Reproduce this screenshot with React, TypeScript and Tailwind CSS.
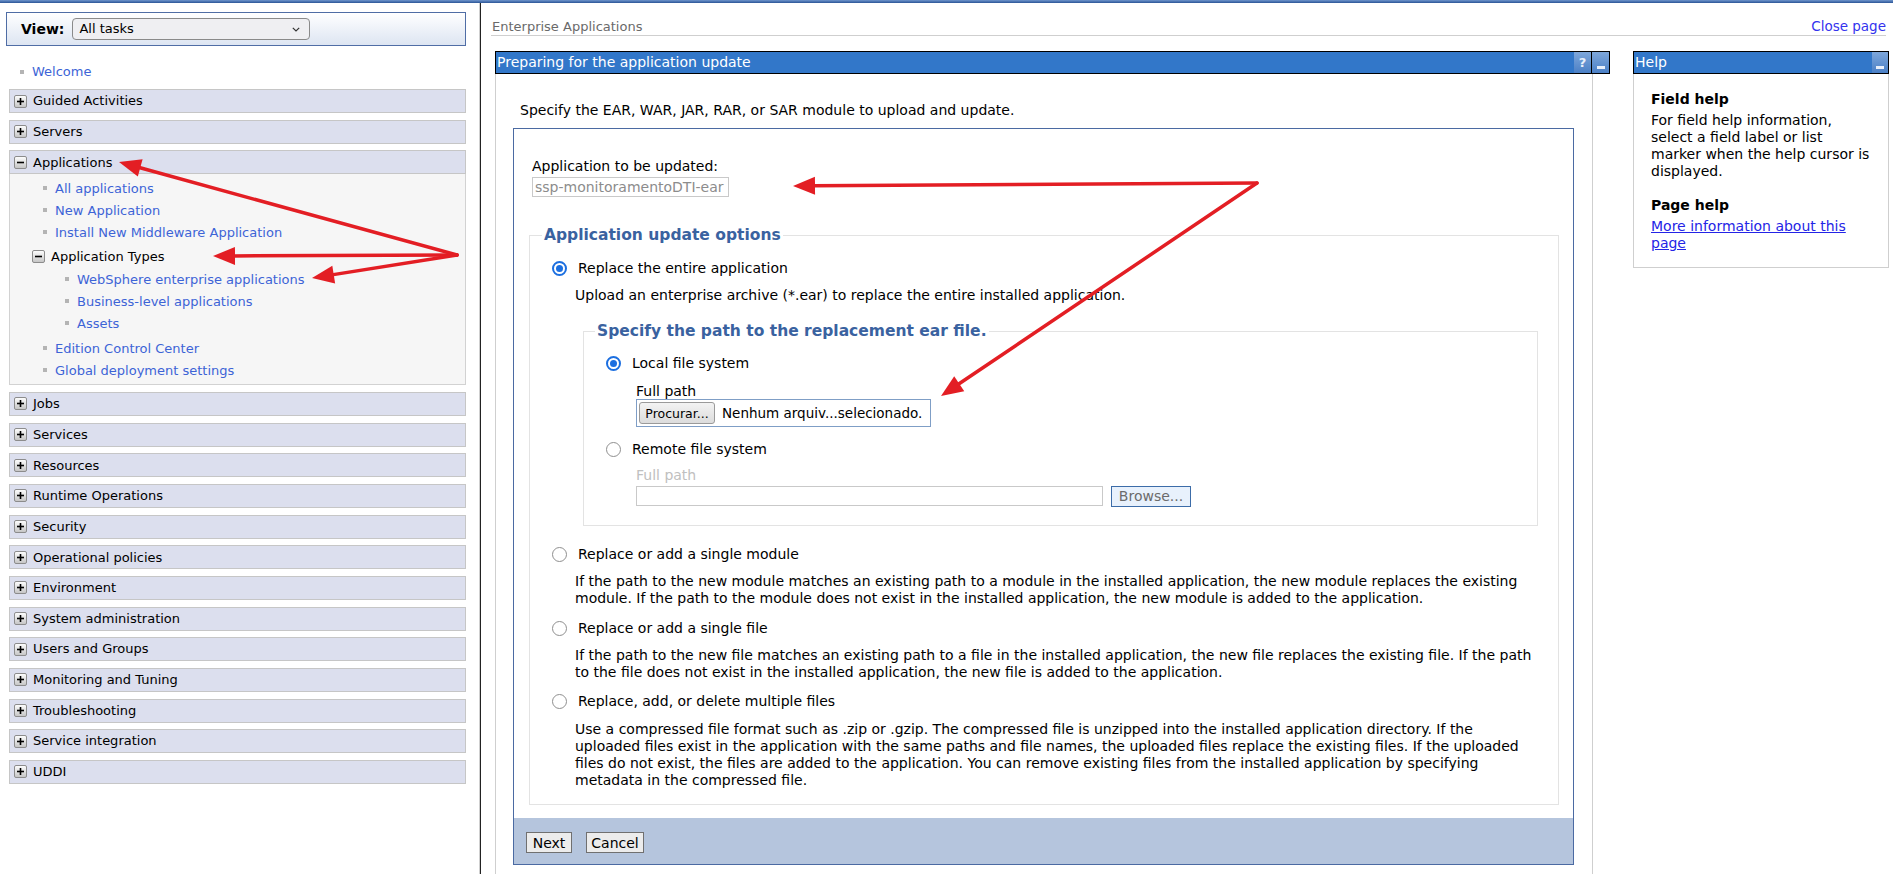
import React from 'react';

// Left navigation entries below the expanded "Applications" group
const lowerGroups = [
  'Jobs',
  'Services',
  'Resources',
  'Runtime Operations',
  'Security',
  'Operational policies',
  'Environment',
  'System administration',
  'Users and Groups',
  'Monitoring and Tuning',
  'Troubleshooting',
  'Service integration',
  'UDDI',
];

// Red annotation arrows: [fromX, fromY, tipX, tipY]
const arrows: [number, number, number, number][] = [
  [457, 255, 119, 162],
  [457, 255, 213, 256],
  [457, 255, 312, 278],
  [1257, 183, 793, 186],
  [1257, 183, 941, 396],
];

const ToggleIcon = ({ plus }: { plus?: boolean }) => (
  <svg width="13" height="13" viewBox="0 0 13 13" className="shrink-0">
    <defs>
      <linearGradient id="tgl" x1="0" y1="0" x2="0" y2="1">
        <stop offset="0" stopColor="#ffffff" />
        <stop offset="1" stopColor="#c4c4c4" />
      </linearGradient>
    </defs>
    <rect x="0.5" y="0.5" width="12" height="12" rx="1.5" fill="url(#tgl)" stroke="#8c8c8c" />
    <path d="M3 6.5h7" stroke="#000" strokeWidth="1.6" />
    {plus && <path d="M6.5 3v7" stroke="#000" strokeWidth="1.6" />}
  </svg>
);

const Bullet = () => <span className="w-[4px] h-[4px] bg-[#b4b4b4] shrink-0" />;

const NavRow = ({ label, open }: { label: string; open?: boolean }) => (
  <div className="ml-[3px] h-[24px] border border-[#c6c6c6] bg-[#dcdfee] flex items-center pl-[4px] gap-[6px] text-[13px] text-black">
    <ToggleIcon plus={!open} />
    <span>{label}</span>
  </div>
);

const NavLink = ({ label, indent, extra }: { label: string; indent: string; extra?: string }) => (
  <div className={`h-[22px] flex items-center gap-[8px] ${indent} ${extra || ''}`}>
    <Bullet />
    <span className="text-[#3d64d6]">{label}</span>
  </div>
);

const Radio = ({ checked }: { checked?: boolean }) =>
  checked ? (
    <span className="w-[15px] h-[15px] rounded-full border-2 border-[#1c6fe0] bg-white flex items-center justify-center shrink-0">
      <span className="w-[7px] h-[7px] rounded-full bg-[#1c6fe0]" />
    </span>
  ) : (
    <span className="w-[15px] h-[15px] rounded-full border-[1.5px] border-[#8f8f8f] bg-white shrink-0" />
  );

const Arrow = ({ a }: { a: [number, number, number, number] }) => {
  const [x1, y1, x2, y2] = a;
  const dx = x2 - x1;
  const dy = y2 - y1;
  const len = Math.hypot(dx, dy);
  const ux = dx / len;
  const uy = dy / len;
  const hl = 22;
  const hw = 9;
  const bx = x2 - ux * hl;
  const by = y2 - uy * hl;
  const pts = `${x2},${y2} ${bx - uy * hw},${by + ux * hw} ${bx + uy * hw},${by - ux * hw}`;
  return (
    <g>
      <line x1={x1} y1={y1} x2={bx + ux * 2} y2={by + uy * 2} stroke="#e31e24" strokeWidth="3.5" strokeLinecap="round" />
      <polygon points={pts} fill="#e31e24" />
    </g>
  );
};

const TitleBar = ({ title, help }: { title: string; help?: boolean }) => (
  <div className="h-[23px] border border-black bg-[#3277c9] flex text-white text-[14px]">
    <span className="flex-1 pl-[1px] leading-[21px]">{title}</span>
    {help && (
      <>
        <span className="w-[17px] flex items-center justify-center bg-gradient-to-b from-[#7ea7db] to-[#4b80c6] font-bold text-[13px] text-[#e8effa]">?</span>
        <span className="w-px bg-black" />
      </>
    )}
    <span className={`${help ? 'w-[17px]' : 'w-[16px]'} flex items-end justify-center pb-[4px] bg-gradient-to-b from-[#7ea7db] to-[#4b80c6]`}>
      <span className="w-[8px] h-[3px] bg-[#e8effa]" />
    </span>
  </div>
);

const App = () => {
  return (
    <div className="relative w-[1893px] h-[874px] overflow-hidden bg-white text-black font-['DejaVu_Sans','Verdana',sans-serif]">
      <div className="h-[3px] bg-gradient-to-b from-[#6f95cc] to-[#2b5597]" />

      <div className="flex h-[871px]">
        {/* Navigation frame */}
        <nav className="w-[480px] shrink-0 border-r border-[#cfcfcf] pl-[6px] pr-[13px]">
          <div className="mt-[9px] h-[34px] border border-[#4f6da5] bg-gradient-to-b from-white to-[#dde5f2] flex items-center pl-[14px] gap-[8px]">
            <span className="text-[14px] font-bold">View:</span>
            <div className="w-[238px] h-[22px] rounded-[4px] border border-[#8a8a8a] bg-[#efeff2] flex items-center justify-between pl-[6px] pr-[9px] text-[13px]">
              <span>All tasks</span>
              <svg width="8" height="5" viewBox="0 0 8 5">
                <path d="M0.8 0.8L4 4L7.2 0.8" fill="none" stroke="#333" strokeWidth="1.2" />
              </svg>
            </div>
          </div>

          <div className="mt-[17px] h-[18px] flex items-center gap-[8px] ml-[14px] text-[13px]">
            <Bullet />
            <span className="text-[#3d64d6]">Welcome</span>
          </div>

          <div className="mt-[8px] flex flex-col gap-[6.67px] text-[13px]">
            <NavRow label="Guided Activities" />
            <NavRow label="Servers" />
            <div>
              <NavRow label="Applications" open />
              <div className="ml-[3px] border-x border-b border-[#d2d2d2] bg-[#f6f6f6] pt-[3px] pb-[3px]">
                <NavLink label="All applications" indent="ml-[33px]" />
                <NavLink label="New Application" indent="ml-[33px]" />
                <NavLink label="Install New Middleware Application" indent="ml-[33px]" />
                <div className="mt-[2px] h-[22px] flex items-center gap-[6px] ml-[22px]">
                  <ToggleIcon />
                  <span>Application Types</span>
                </div>
                <NavLink label="WebSphere enterprise applications" indent="ml-[55px]" extra="mt-[1px]" />
                <NavLink label="Business-level applications" indent="ml-[55px]" />
                <NavLink label="Assets" indent="ml-[55px]" />
                <NavLink label="Edition Control Center" indent="ml-[33px]" extra="mt-[3px]" />
                <NavLink label="Global deployment settings" indent="ml-[33px]" />
              </div>
            </div>
            {lowerGroups.map((g) => (
              <NavRow key={g} label={g} />
            ))}
          </div>
        </nav>

        {/* Content frame */}
        <main className="flex-1 border-l border-[#222]">
          <div className="ml-[10px] mr-[7px] pt-[15px] border-b border-[#cfcfcf] flex justify-between text-[13px] leading-[17px]">
            <span className="pl-[1px] text-[#6a6a6a]">Enterprise Applications</span>
            <span className="text-[13.5px] text-[#3333ee]">Close page</span>
          </div>

          <div className="mt-[15px] pl-[14px] flex items-start">
            {/* Main panel */}
            <div className="w-[1115px] h-[823px] flex flex-col">
              <TitleBar title="Preparing for the application update" help />
              <div className="w-[1098px] flex-1 border-x border-[#cfcfcf] pt-[28px] text-[14px] leading-[17px]">
                <p className="pl-[24px]">Specify the EAR, WAR, JAR, RAR, or SAR module to upload and update.</p>

                <div className="mt-[9px] ml-[17px] w-[1061px] h-[737px] border border-[#4b6aa2] flex flex-col">
                  <div className="pl-[18px] pt-[29px]">
                    <p>Application to be updated:</p>
                    <div className="mt-[2px] w-[197px] h-[20px] border border-[#c9c9c9] px-[2px] leading-[18px] text-[#8c8c8c]">
                      ssp-monitoramentoDTI-ear
                    </div>
                  </div>

                  <fieldset className="mt-[28px] ml-[15px] mr-[14px] border border-[#e3e3e3] pl-[12px] pr-[20px] pb-[15px]">
                    <legend className="px-[2px] text-[15.5px] leading-[20px] font-bold text-[#3a62a0]">Application update options</legend>

                    <div className="mt-[15px] ml-[10px] h-[17px] flex items-center gap-[11px]">
                      <Radio checked />
                      <span>Replace the entire application</span>
                    </div>
                    <p className="mt-[10px] ml-[33px]">Upload an enterprise archive (*.ear) to replace the entire installed application.</p>

                    <fieldset className="mt-[17px] ml-[41px] border border-[#e3e3e3] pl-[11px] pb-[18px]">
                      <legend className="px-[2px] text-[15.5px] leading-[20px] font-bold text-[#3a62a0]">Specify the path to the replacement ear file.</legend>

                      <div className="mt-[14px] ml-[11px] h-[17px] flex items-center gap-[11px]">
                        <Radio checked />
                        <span>Local file system</span>
                      </div>
                      <p className="mt-[11px] ml-[41px] leading-[16px]">Full path</p>
                      <div className="ml-[41px] w-[295px] h-[28px] border border-[#7f9ec6] flex items-center pl-[2px]">
                        <span className="h-[22px] w-[76px] border border-[#9a9a9a] rounded-[3px] bg-gradient-to-b from-[#f3f3f3] to-[#dcdcdc] text-[12.5px] flex items-center justify-center">
                          Procurar...
                        </span>
                        <span className="ml-[7px] text-[13.5px] whitespace-nowrap">Nenhum arquiv...selecionado.</span>
                      </div>

                      <div className="mt-[14px] ml-[11px] h-[17px] flex items-center gap-[11px]">
                        <Radio />
                        <span>Remote file system</span>
                      </div>
                      <p className="mt-[9px] ml-[41px] text-[#c0c0c0]">Full path</p>
                      <div className="mt-[2px] ml-[41px] flex items-start gap-[8px]">
                        <div className="w-[467px] h-[20px] border border-[#c9c9c9]" />
                        <span className="w-[80px] h-[21px] border border-[#3c6ca8] bg-[#e8f1fc] text-[#6b6b6b] flex items-center justify-center">
                          Browse...
                        </span>
                      </div>
                    </fieldset>

                    <div className="mt-[20px] ml-[10px] h-[17px] flex items-center gap-[11px]">
                      <Radio />
                      <span>Replace or add a single module</span>
                    </div>
                    <p className="mt-[10px] ml-[33px] whitespace-nowrap">
                      If the path to the new module matches an existing path to a module in the installed application, the new module replaces the existing
                      <br />
                      module. If the path to the module does not exist in the installed application, the new module is added to the application.
                    </p>

                    <div className="mt-[13px] ml-[10px] h-[17px] flex items-center gap-[11px]">
                      <Radio />
                      <span>Replace or add a single file</span>
                    </div>
                    <p className="mt-[10px] ml-[33px] whitespace-nowrap">
                      If the path to the new file matches an existing path to a file in the installed application, the new file replaces the existing file. If the path
                      <br />
                      to the file does not exist in the installed application, the new file is added to the application.
                    </p>

                    <div className="mt-[12px] ml-[10px] h-[17px] flex items-center gap-[11px]">
                      <Radio />
                      <span>Replace, add, or delete multiple files</span>
                    </div>
                    <p className="mt-[11px] ml-[33px] whitespace-nowrap">
                      Use a compressed file format such as .zip or .gzip. The compressed file is unzipped into the installed application directory. If the
                      <br />
                      uploaded files exist in the application with the same paths and file names, the uploaded files replace the existing files. If the uploaded
                      <br />
                      files do not exist, the files are added to the application. You can remove existing files from the installed application by specifying
                      <br />
                      metadata in the compressed file.
                    </p>
                  </fieldset>

                  <div className="mt-auto h-[46px] bg-[#b5c5dd] pl-[12px] pt-[14px] flex items-start gap-[14px]">
                    <button className="h-[21px] w-[46px] border border-[#707070] bg-[#ececec] text-[14px] leading-none">Next</button>
                    <button className="h-[21px] w-[58px] border border-[#707070] bg-[#ececec] text-[14px] leading-none">Cancel</button>
                  </div>
                </div>
              </div>
            </div>

            {/* Help panel */}
            <div className="ml-[23px] w-[256px]">
              <TitleBar title="Help" />
              <div className="border-x border-b border-[#cfcfcf] pl-[17px] pt-[17px] pb-[15px] text-[14px] leading-[17px]">
                <h3 className="font-bold">Field help</h3>
                <p className="mt-[4px] whitespace-nowrap">
                  For field help information,
                  <br />
                  select a field label or list
                  <br />
                  marker when the help cursor is
                  <br />
                  displayed.
                </p>
                <h3 className="mt-[17px] font-bold">Page help</h3>
                <a className="mt-[4px] block text-[#2424e6] underline">
                  More information about this
                  <br />
                  page
                </a>
              </div>
            </div>
          </div>
        </main>
      </div>

      <svg className="absolute inset-0 pointer-events-none" width="1893" height="874" viewBox="0 0 1893 874">
        {arrows.map((a, i) => (
          <Arrow key={i} a={a} />
        ))}
      </svg>
    </div>
  );
};

export default App;
